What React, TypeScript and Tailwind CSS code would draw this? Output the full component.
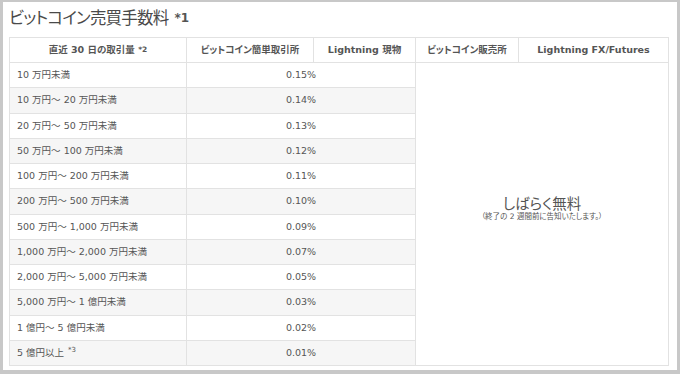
const rows: [string, string, boolean?][] = [
  ['10 万円未満', '0.15%'],
  ['10 万円～ 20 万円未満', '0.14%'],
  ['20 万円～ 50 万円未満', '0.13%'],
  ['50 万円～ 100 万円未満', '0.12%'],
  ['100 万円～ 200 万円未満', '0.11%'],
  ['200 万円～ 500 万円未満', '0.10%'],
  ['500 万円～ 1,000 万円未満', '0.09%'],
  ['1,000 万円～ 2,000 万円未満', '0.07%'],
  ['2,000 万円～ 5,000 万円未満', '0.05%'],
  ['5,000 万円～ 1 億円未満', '0.03%'],
  ['1 億円～ 5 億円未満', '0.02%'],
  ['5 億円以上', '0.01%', true],
];

const font = "font-['DejaVu_Sans','Noto_Sans_CJK_JP',sans-serif] [font-feature-settings:'palt']";

export default function App() {
  return (
    <div className={`w-[680px] h-[374px] bg-[#c8c8c8] pt-[2px] px-[3px] pb-[4px] ${font}`}>
      <div className="h-full bg-white pl-[6px] pt-[2px]">
        <h1 className="h-[33px] text-[16.5px] leading-[26px] tracking-[-0.8px] text-[#4a4a4a] font-['Noto_Sans_CJK_JP',sans-serif] [font-feature-settings:'palt']">
          ビットコイン売買手数料
          <sup className="ml-[6px] text-[12px] font-bold tracking-normal text-[#555] relative top-[-2px] font-['DejaVu_Sans',sans-serif]">*1</sup>
        </h1>
        <table className="w-[659px] border-collapse text-[#555] table-fixed">
          <colgroup>
            <col className="w-[177px]" />
            <col className="w-[127px]" />
            <col className="w-[102px]" />
            <col className="w-[103px]" />
            <col className="w-[150px]" />
          </colgroup>
          <thead>
            <tr className="h-[25px] text-[9.5px] font-bold">
              <th className="border border-[#e2e2e2] font-bold">
                直近 30 日の取引量 <sup className="text-[7.5px] relative -top-[1px]">*2</sup>
              </th>
              <th className="border border-[#e2e2e2] font-bold">ビットコイン簡単取引所</th>
              <th className="border border-[#e2e2e2] font-bold">Lightning 現物</th>
              <th className="border border-[#e2e2e2] font-bold">ビットコイン販売所</th>
              <th className="border border-[#e2e2e2] font-bold">Lightning FX/Futures</th>
            </tr>
          </thead>
          <tbody className="text-[9.5px]">
            {rows.map(([range, fee, note], i) => (
              <tr key={range} className={`h-[25.25px] ${i % 2 === 1 ? 'bg-[#f6f6f6]' : 'bg-white'}`}>
                <td className="border border-[#e2e2e2] pl-[7px]">
                  {range}
                  {note && <sup className="ml-[4px] text-[7px]">*3</sup>}
                </td>
                <td colSpan={2} className="border border-[#e2e2e2] text-center">
                  {fee}
                </td>
                {i === 0 && (
                  <td colSpan={2} rowSpan={12} className="border border-[#e2e2e2] bg-white text-center align-middle">
                    <div className="text-[14.5px] leading-[18px] text-[#555] font-['Noto_Sans_CJK_JP',sans-serif]">しばらく無料</div>
                    <div className="text-[7.5px] leading-[10px] text-[#555] pb-[12px]">（終了の 2 週間前に告知いたします。）</div>
                  </td>
                )}
              </tr>
            ))}
          </tbody>
        </table>
      </div>
    </div>
  );
}
